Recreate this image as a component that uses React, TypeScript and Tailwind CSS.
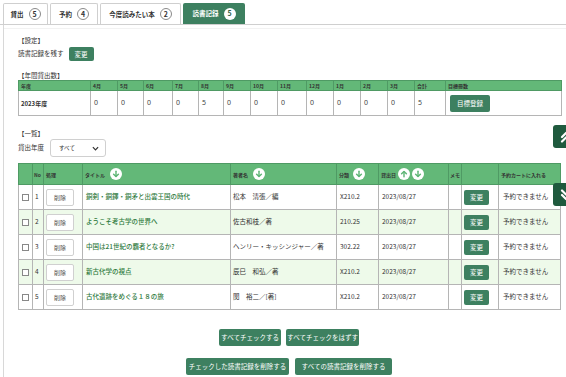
import React from "react";

const FONT = { fontFamily: '"Noto Sans CJK JP", "Noto Sans", sans-serif' };
const NUMFONT = { fontFamily: '"Noto Sans", "Noto Sans CJK JP", sans-serif' };

function Badge({ n, active }: { n: number; active?: boolean }) {
  return (
    <span
      className={
        "w-[12px] h-[12px] rounded-full flex items-center justify-center text-[7px] font-bold leading-none " +
        (active ? "bg-white text-[#2f5f46]" : "border border-[#8a8a8a] text-[#333] bg-white")
      }
    >
      {n}
    </span>
  );
}

function Tab({ label, n, w, active }: { label: string; n: number; w: string; active?: boolean }) {
  return (
    <div
      className={
        "h-[21px] flex items-center justify-center gap-[5px] rounded-t-[2px] text-[6.5px] font-bold leading-none " +
        w +
        (active
          ? " bg-[#3d8060] text-white"
          : " bg-white border border-b-0 border-[#cfcfcf] text-[#333]")
      }
    >
      <span>{label}</span>
      <Badge n={n} active={active} />
    </div>
  );
}

function ArrowCircle({ up }: { up?: boolean }) {
  return (
    <span className="inline-flex w-[12px] h-[12px] rounded-full bg-white items-center justify-center align-middle">
      <svg width="8" height="8" viewBox="0 0 10 10" style={{ transform: up ? "rotate(180deg)" : undefined }}>
        <path d="M5 1.5 V8" stroke="#5fb676" strokeWidth="1.8" strokeLinecap="round" fill="none" />
        <path d="M2 5.2 L5 8.2 L8 5.2" stroke="#5fb676" strokeWidth="1.8" strokeLinecap="round" strokeLinejoin="round" fill="none" />
      </svg>
    </span>
  );
}

const months = ["4月", "5月", "6月", "7月", "8月", "9月", "10月", "11月", "12月", "1月", "2月", "3月"];
const monthVals = ["0", "0", "0", "0", "5", "0", "0", "0", "0", "0", "0", "0"];
const yearCols = [72, 27, 26, 29, 26, 25, 27, 27, 29, 27, 27, 27, 27, 31, 116];

const listCols = [14, 11, 39, 148, 106, 42, 70, 13, 37, 62];
const rows = [
  { no: 1, title: "銅剣・銅鐸・銅矛と出雲王国の時代", author: "松本　清張／編", cls: "X210.2" },
  { no: 2, title: "ようこそ考古学の世界へ", author: "佐古和枝／著", cls: "210.25" },
  { no: 3, title: "中国は21世紀の覇者となるか?", author: "ヘンリー・キッシンジャー／著", cls: "302.22" },
  { no: 4, title: "新古代学の視点", author: "辰巳　和弘／著", cls: "X210.2" },
  { no: 5, title: "古代遺跡をめぐる１８の旅", author: "関　裕二／[著]", cls: "X210.2" },
];

function GreenBtn({ children, className = "" }: { children: React.ReactNode; className?: string }) {
  return (
    <div
      className={
        "bg-[#3d8060] text-white text-[6.5px] leading-none rounded-[2px] flex items-center justify-center " + className
      }
    >
      {children}
    </div>
  );
}

function Chevrons({ up }: { up?: boolean }) {
  return (
    <svg width="14" height="14" viewBox="0 0 14 14" style={{ transform: up ? undefined : "rotate(180deg)" }}>
      <path d="M3 7 L7 3 L11 7" stroke="white" strokeWidth="2.2" fill="none" strokeLinecap="round" strokeLinejoin="round" />
      <path d="M3 11.5 L7 7.5 L11 11.5" stroke="white" strokeWidth="2.2" fill="none" strokeLinecap="round" strokeLinejoin="round" />
    </svg>
  );
}

export default function App() {
  return (
    <div className="w-[566px] h-[377px] overflow-hidden bg-white relative text-[#333]" style={FONT}>
      {/* tabs */}
      <div className="flex items-end gap-[2px] pl-[3px] pt-[3px] h-[25px] border-b border-[#cfcfcf]">
        <Tab label="貸出" n={5} w="w-[45px]" />
        <Tab label="予約" n={4} w="w-[48px]" />
        <Tab label="今度読みたい本" n={2} w="w-[81px]" />
        <Tab label="読書記録" n={5} w="w-[62px]" active />
      </div>

      <div className="ml-[3px] border-l border-[#d8d8d8] h-[352px]">
        <div className="h-[4px] border-b border-[#f2f2f2]" />
        <div className="pl-[14px]">
          {/* settings */}
          <div className="pt-[7px] text-[6.5px] leading-[8px]">【設定】</div>
          <div className="flex items-center gap-[5px] mt-[2px] h-[16px]">
            <span className="text-[6.5px]">読書記録を残す</span>
            <GreenBtn className="w-[25px] h-[14px]">変更</GreenBtn>
          </div>

          {/* yearly */}
          <div className="mt-[9px] text-[6.5px] leading-[8px]">【年間貸出数】</div>
          <table className="table-fixed border-collapse mt-[1px] w-[543px]">
            <colgroup>
              {yearCols.map((w, i) => (
                <col key={i} style={{ width: w }} />
              ))}
            </colgroup>
            <thead>
              <tr className="bg-[#63b878] h-[10px]">
                <th className="border border-[#4f9a64] text-left pl-[2px] text-[5px] font-bold leading-none">年度</th>
                {months.map((m) => (
                  <th key={m} className="border border-[#4f9a64] text-left pl-[2px] text-[5px] font-bold leading-none">
                    {m}
                  </th>
                ))}
                <th className="border border-[#4f9a64] text-left pl-[2px] text-[5px] font-bold leading-none">合計</th>
                <th className="border border-[#4f9a64] text-left pl-[2px] text-[5px] font-bold leading-none">目標冊数</th>
              </tr>
            </thead>
            <tbody>
              <tr className="h-[25px]">
                <td className="border border-[#b5b5b5] pl-[2px] text-[6px] font-bold text-[#333]">2023年度</td>
                {monthVals.map((v, i) => (
                  <td key={i} className="border border-[#b5b5b5] pl-[3px] text-[7px] text-[#444]" style={NUMFONT}>
                    {v}
                  </td>
                ))}
                <td className="border border-[#b5b5b5] pl-[3px] text-[7px] text-[#444]" style={NUMFONT}>5</td>
                <td className="border border-[#b5b5b5] pl-[4px]">
                  <GreenBtn className="w-[40px] h-[17px]">目標登録</GreenBtn>
                </td>
              </tr>
            </tbody>
          </table>

          {/* list */}
          <div className="mt-[13px] text-[6.5px] leading-[8px]">【一覧】</div>
          <div className="flex items-center gap-[6px] mt-[2px]">
            <span className="text-[6.5px]">貸出年度</span>
            <div className="w-[56px] h-[18px] border border-[#d0d0d0] rounded-[3px] flex items-center justify-between pl-[8px] pr-[6px]">
              <span className="text-[5.5px]">すべて</span>
              <svg width="7" height="5" viewBox="0 0 8 5">
                <path d="M1 1 L4 4 L7 1" stroke="#333" strokeWidth="1.4" fill="none" />
              </svg>
            </div>
          </div>

          <table className="table-fixed border-collapse mt-[6px] w-[542px]">
            <colgroup>
              {listCols.map((w, i) => (
                <col key={i} style={{ width: w }} />
              ))}
            </colgroup>
            <thead>
              <tr className="bg-[#63b878] h-[21px] text-[5px] font-bold leading-none">
                <th className="border border-[#4f9a64]"></th>
                <th className="border border-[#4f9a64] text-left pl-[1px]">No</th>
                <th className="border border-[#4f9a64] text-left pl-[2px]">処理</th>
                <th className="border border-[#4f9a64] text-left pl-[2px]">
                  <span className="inline-flex items-center gap-[5px]">
                    タイトル <ArrowCircle />
                  </span>
                </th>
                <th className="border border-[#4f9a64] text-left pl-[2px]">
                  <span className="inline-flex items-center gap-[5px]">
                    著者名 <ArrowCircle />
                  </span>
                </th>
                <th className="border border-[#4f9a64] text-left pl-[2px]">
                  <span className="inline-flex items-center gap-[4px]">
                    分類 <ArrowCircle />
                  </span>
                </th>
                <th className="border border-[#4f9a64] text-left pl-[2px]">
                  <span className="inline-flex items-center gap-[2px]">
                    貸出日 <ArrowCircle up /> <ArrowCircle />
                  </span>
                </th>
                <th className="border border-[#4f9a64] text-left pl-[1px]">メモ</th>
                <th className="border border-[#4f9a64]"></th>
                <th className="border border-[#4f9a64] text-left pl-[2px]">予約カートに入れる</th>
              </tr>
            </thead>
            <tbody>
              {rows.map((r, i) => (
                <tr key={r.no} className={"h-[25px] text-[6.5px] " + (i % 2 === 1 ? "bg-[#eefaea]" : "bg-white")}>
                  <td className="border border-[#b5b5b5] pl-[3px]">
                    <span className="block w-[7px] h-[7px] border border-[#888] bg-white" />
                  </td>
                  <td className="border border-[#b5b5b5] pl-[2px]">{r.no}</td>
                  <td className="border border-[#b5b5b5] pl-[2px]">
                    <div className="w-[28px] h-[17px] border border-[#d0d0d0] rounded-[2px] bg-white flex items-center justify-center text-[6px] text-[#555]">
                      削除
                    </div>
                  </td>
                  <td className="border border-[#b5b5b5] pl-[3px] text-[#2f7a3e] font-medium">{r.title}</td>
                  <td className="border border-[#b5b5b5] pl-[2px]">{r.author}</td>
                  <td className="border border-[#b5b5b5] pl-[3px]">{r.cls}</td>
                  <td className="border border-[#b5b5b5] pl-[3px]">2023/08/27</td>
                  <td className="border border-[#b5b5b5]"></td>
                  <td className="border border-[#b5b5b5] pl-[2px]">
                    <GreenBtn className="w-[25px] h-[15px]">変更</GreenBtn>
                  </td>
                  <td className="border border-[#b5b5b5] pl-[4px]">予約できません</td>
                </tr>
              ))}
            </tbody>
          </table>

          {/* bottom buttons */}
          <div className="flex justify-center gap-[5px] mt-[19px] w-[542px]">
            <GreenBtn className="w-[62px] h-[17px]">すべてチェックする</GreenBtn>
            <GreenBtn className="w-[73px] h-[17px]">すべてチェックをはずす</GreenBtn>
          </div>
          <div className="flex justify-center gap-[6px] mt-[12px] w-[542px]">
            <GreenBtn className="w-[103px] h-[17px]">チェックした読書記録を削除する</GreenBtn>
            <GreenBtn className="w-[97px] h-[17px]">すべての読書記録を削除する</GreenBtn>
          </div>
        </div>
      </div>

      {/* floating scroll buttons */}
      <div className="absolute left-[553px] top-[125px] w-[26px] h-[23px] bg-[#1f5a3e] rounded-[3px] flex items-center justify-center">
        <Chevrons up />
      </div>
      <div className="absolute left-[553px] top-[183px] w-[26px] h-[23px] bg-[#1f5a3e] rounded-[3px] flex items-center justify-center">
        <Chevrons />
      </div>
    </div>
  );
}
